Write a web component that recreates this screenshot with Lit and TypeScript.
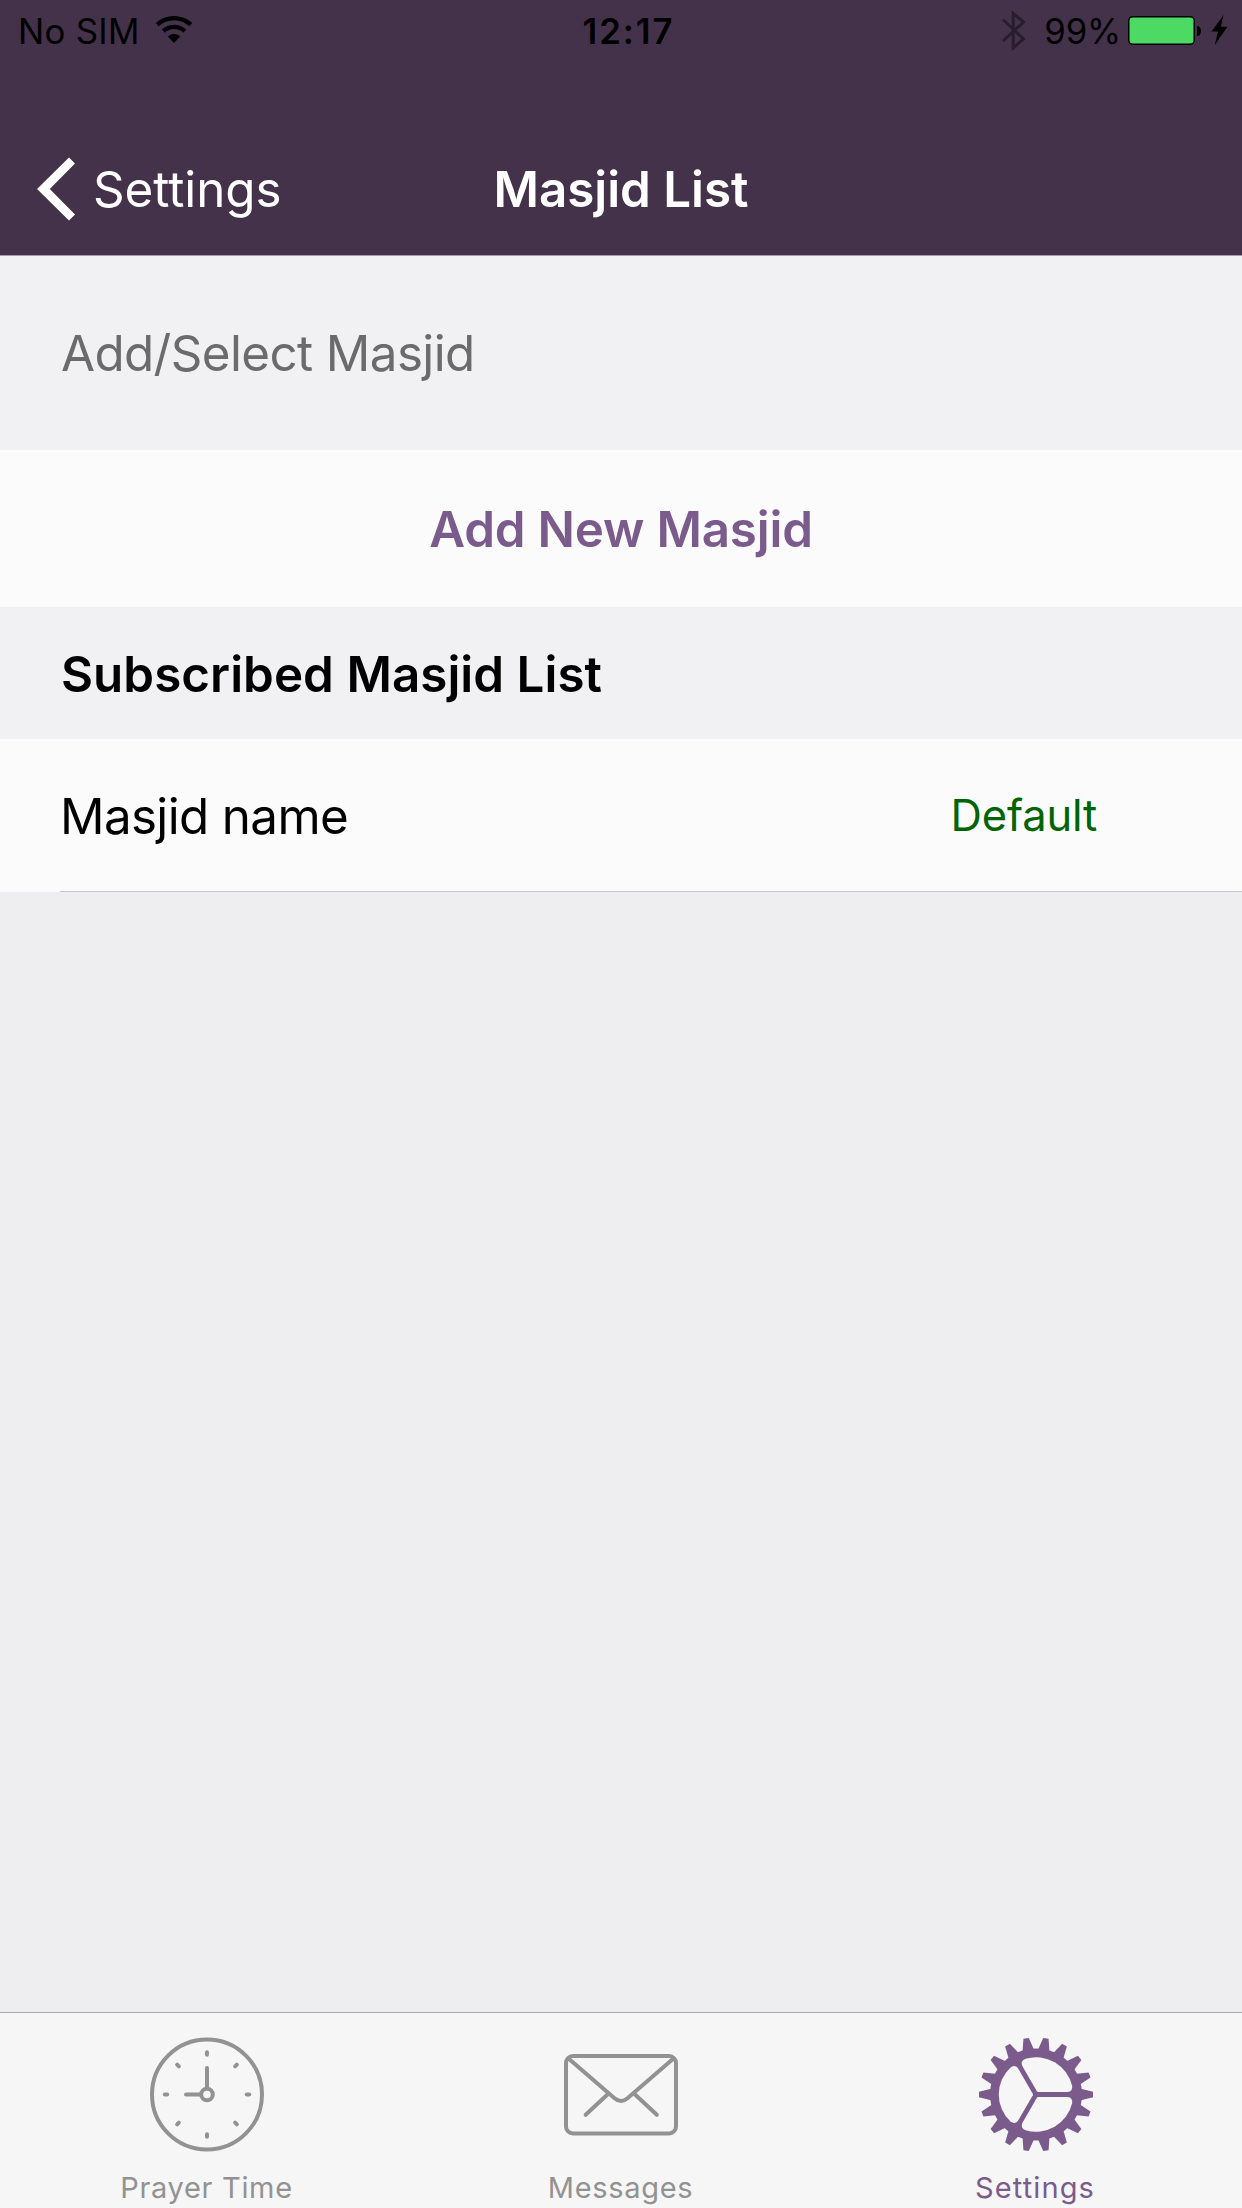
import { LitElement, html, css, svg } from "lit";
import { customElement, property } from "lit/decorators.js";

const TEETH = Array.from({ length: 18 }, (_, i) => i * 20);
const WINDOWS = [0, 120, 240];
const TICKS = Array.from({ length: 8 }, (_, i) => i * 45);

const clockIcon = html`
  <svg width="116" height="117" viewBox="-58 -58.5 116 117" fill="none" stroke="currentColor" stroke-width="4" stroke-linecap="round">
    <circle r="55" />
    ${TICKS.map((a) => svg`<path d="M0 -42.2V-39.8" transform="rotate(${a})" />`)}
    <path d="M0 -7V-26.5M-7 0H-21" />
    <circle r="5.8" />
  </svg>`;

const mailIcon = html`
  <svg width="116" height="117" viewBox="-58 -58.5 116 117" fill="none" stroke="currentColor" stroke-width="4" stroke-linecap="round">
    <rect x="-55" y="-38.5" width="110" height="77.5" rx="7" />
    <path d="M-52.5 -36L-6.5 3.8Q0 9.2 6.5 3.8L52.5 -36M-13 -0.5L-35.3 20.3M13.5 -0.5L35.8 20.3" />
  </svg>`;

const gearIcon = html`
  <svg width="116" height="117" viewBox="-59 -58.5 116 117" fill="currentColor" overflow="visible">
    <circle r="46" />
    ${TEETH.map((a) => svg`<path d="M43 -6.2L57 -2.7V2.7L43 6.2Z" transform="rotate(${a})" />`)}
    ${WINDOWS.map(
      (a) => svg`<path class="window" transform="rotate(${a})"
        d="M2.1 -2.4H31.5Q37 -3 36.1 -8.8A37 37 0 0 0 -10.4 -35.7Q-16 -33.6 -13.7 -28.5L1 -3.05Z" />`,
    )}
  </svg>`;

@customElement("status-bar")
class StatusBar extends LitElement {
  static styles = css`
    :host {
      display: grid;
      grid-template-columns: 1fr auto 1fr;
      align-items: center;
      height: 62px;
      color: #000;
      font-size: 34.8px;
      line-height: 60px;
    }
    .left, .right { display: flex; align-items: center; height: 60px; }
    .left { padding-left: 18px; }
    .right { justify-content: flex-end; padding-right: 14px; }
    .carrier { letter-spacing: 0.29px; }
    .time { font-weight: 600; letter-spacing: 1.95px; padding-left: 15px; }
    .percent { letter-spacing: -0.2px; }
    .wifi { margin: 0 0 2px 14px; }
    .bluetooth { margin-right: 17px; opacity: 0.4; }
    .battery { margin-left: 7px; }
    .bolt { margin: 0 0 1px 9px; }
    svg { display: block; }
  `;
  render() {
    return html`
      <div class="left">
        <span class="carrier">No SIM</span>
        <svg class="wifi" width="40" height="30" viewBox="0 0 40 30" fill="none" stroke="#000" stroke-width="4.2">
          <path d="M3.2 9.6A24.8 24.8 0 0 1 36.8 9.6M9.2 16.1A16 16 0 0 1 30.8 16.1" />
          <path d="M20 28L13.8 21.4A9 9 0 0 1 26.2 21.4Z" fill="#000" stroke="none" />
        </svg>
      </div>
      <span class="time">12:17</span>
      <div class="right">
        <svg class="bluetooth" width="26" height="42" viewBox="0 0 26 42" fill="none" stroke="#000" stroke-width="3">
          <path d="M2 9.5L22.5 29L12.2 38V3.3L22.5 12L2 31" />
        </svg>
        <span class="percent">99%</span>
        <svg class="battery" width="74" height="30" viewBox="0 0 74 30">
          <rect x="0.75" y="0.75" width="65.5" height="27.5" rx="4" fill="#4cd964" stroke="#000" stroke-width="1.5" />
          <path d="M69 10C71.4 10 73 12 73 15S71.4 20 69 20Z" />
        </svg>
        <svg class="bolt" width="17" height="31" viewBox="0 0 17 31">
          <path d="M12.5 0L0.5 16.5H7L3.8 30L16.5 11.8H9.8Z" />
        </svg>
      </div>
    `;
  }
}

@customElement("nav-header")
class NavHeader extends LitElement {
  static styles = css`
    :host {
      display: grid;
      grid-template-columns: 1fr auto 1fr;
      height: 132px;
      margin-top: 61px;
      align-items: center;
      color: #fff;
      font-size: 49.3px;
      line-height: 132px;
    }
    .back { display: flex; align-items: center; padding-left: 36px; letter-spacing: -0.03px; }
    .chevron { display: block; margin-right: 17px; }
    .title { font-weight: 600; letter-spacing: -0.02px; }
  `;
  render() {
    return html`
      <div class="back">
        <svg class="chevron" width="40" height="66" viewBox="0 0 40 66" fill="#fff">
          <path d="M33 1.5L1 33L33 64.5L39 58.5L13.8 33L39 7.5Z" />
        </svg>
        <span>Settings</span>
      </div>
      <span class="title">Masjid List</span>
    `;
  }
}

@customElement("tab-item")
class TabItem extends LitElement {
  @property() label = "";
  @property() name = "";
  static styles = css`
    :host {
      flex: 1;
      display: flex;
      flex-direction: column;
      align-items: center;
      padding-top: 23px;
      color: #929292;
      font-size: 29px;
      line-height: 40px;
    }
    :host([name="settings"]) { color: #7b5b8c; }
    svg { display: block; }
    .window { fill: #f6f6f6; }
    .label { margin-top: 15px; padding-right: 1px; letter-spacing: 0.68px; }
    :host([name="settings"]) .label { letter-spacing: 1.11px; padding-right: 0; }
  `;
  render() {
    const icon = this.name === "clock" ? clockIcon : this.name === "mail" ? mailIcon : gearIcon;
    return html`${icon}<span class="label">${this.label}</span>`;
  }
}

@customElement("app-root")
class AppRoot extends LitElement {
  static styles = css`
    :host {
      display: flex;
      flex-direction: column;
      height: 2208px;
      width: 1242px;
      overflow: hidden;
      background: #eeeef0;
      font-family: Inter, "Liberation Sans", sans-serif;
      font-size: 49.3px;
      color: #000;
      white-space: nowrap;
    }
    .top { height: 255px; background: #44324b; border-bottom: 1px solid #a29ba7; box-sizing: content-box; }
    .section, .row { display: flex; align-items: center; box-sizing: border-box; padding-left: 60px; }
    .section { background: #f1f1f4; }
    .row { background: #fbfbfb; }
    .hint { height: 194px; color: #6b6b6b; letter-spacing: -0.59px; padding-left: 61px; }
    .action { height: 157px; justify-content: center; padding: 0; color: #7b5b8c; font-weight: 600; letter-spacing: -0.18px; }
    .heading { height: 132px; font-weight: 600; letter-spacing: 0.05px; padding: 2px 0 0 61px; }
    .entry { height: 153px; padding-right: 144px; justify-content: space-between; }
    .name { letter-spacing: -0.62px; padding-top: 1px; }
    .status { color: #006400; font-size: 43.5px; letter-spacing: -0.18px; padding: 0 1px 1px 0; }
    .rule { height: 1px; margin: -1px 0 0 60px; background: #c8c7cc; }
    .space { flex: 1; }
    .tabs { display: flex; height: 195px; border-top: 1px solid #a8a8aa; background: #f6f6f6; }
  `;
  render() {
    return html`
      <div class="top">
        <status-bar></status-bar>
        <nav-header></nav-header>
      </div>
      <div class="section hint">Add/Select Masjid</div>
      <div class="row action">Add New Masjid</div>
      <div class="section heading">Subscribed Masjid List</div>
      <div class="row entry">
        <span class="name">Masjid name</span>
        <span class="status">Default</span>
      </div>
      <div class="rule"></div>
      <div class="space"></div>
      <div class="tabs">
        <tab-item name="clock" label="Prayer Time"></tab-item>
        <tab-item name="mail" label="Messages"></tab-item>
        <tab-item name="settings" label="Settings"></tab-item>
      </div>
    `;
  }
}
